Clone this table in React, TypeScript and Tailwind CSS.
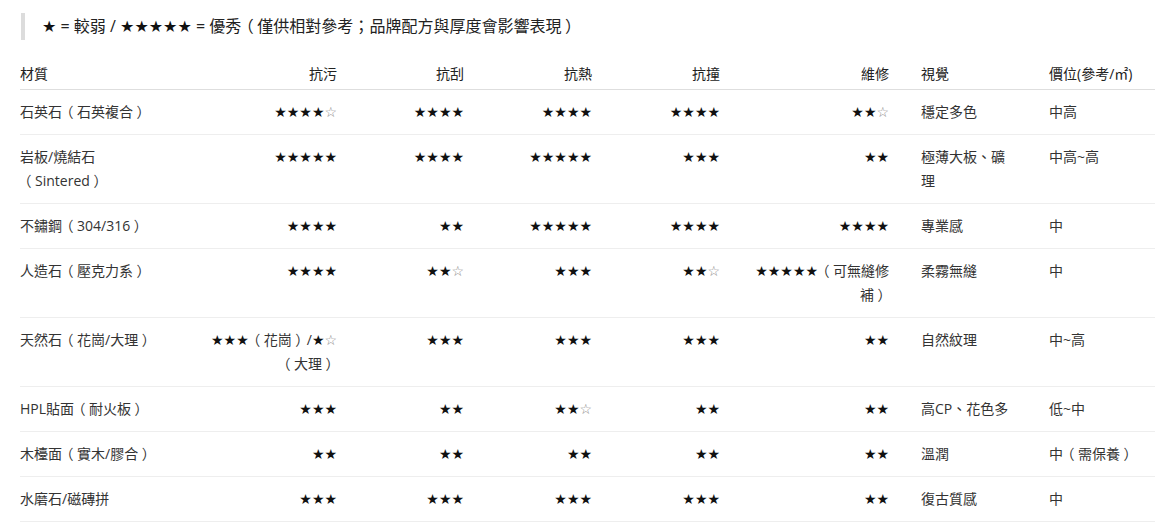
import * as React from "react";

type Row = {
  name: string;
  stain: string;
  scratch: string;
  heat: string;
  impact: string;
  repair: string;
  look: string;
  price: string;
};

const rows: Row[] = [
  { name: "石英石（石英複合）", stain: "★★★★☆", scratch: "★★★★", heat: "★★★★", impact: "★★★★", repair: "★★☆", look: "穩定多色", price: "中高" },
  { name: "岩板/燒結石（Sintered）", stain: "★★★★★", scratch: "★★★★", heat: "★★★★★", impact: "★★★", repair: "★★", look: "極薄大板、礦理", price: "中高~高" },
  { name: "不鏽鋼（304/316）", stain: "★★★★", scratch: "★★", heat: "★★★★★", impact: "★★★★", repair: "★★★★", look: "專業感", price: "中" },
  { name: "人造石（壓克力系）", stain: "★★★★", scratch: "★★☆", heat: "★★★", impact: "★★☆", repair: "★★★★★（可無縫修補）", look: "柔霧無縫", price: "中" },
  { name: "天然石（花崗/大理）", stain: "★★★（花崗）/★☆（大理）", scratch: "★★★", heat: "★★★", impact: "★★★", repair: "★★", look: "自然紋理", price: "中~高" },
  { name: "HPL貼面（耐火板）", stain: "★★★", scratch: "★★", heat: "★★☆", impact: "★★", repair: "★★", look: "高CP、花色多", price: "低~中" },
  { name: "木檯面（實木/膠合）", stain: "★★", scratch: "★★", heat: "★★", impact: "★★", repair: "★★", look: "溫潤", price: "中（需保養）" },
  { name: "水磨石/磁磚拼", stain: "★★★", scratch: "★★★", heat: "★★★", impact: "★★★", repair: "★★", look: "復古質感", price: "中" },
];

const baseFont = "font-['Open_Sans','Noto_Sans_CJK_TC',sans-serif]";

// narrow DejaVu stars, lighter hollow ones; full-width parens are set
// proportional and padded so the ink sits in the middle of its box
function Rich({ text }: { text: string }) {
  return (
    <>
      {Array.from(text).map((ch, i) => {
        if (ch === "☆")
          return (
            <span key={i} className="font-['DejaVu_Sans'] text-[#888]">
              {ch}
            </span>
          );
        if (ch === "★")
          return (
            <span key={i} className="font-['DejaVu_Sans'] text-[#111]">
              {ch}
            </span>
          );
        if (ch === "（" || ch === "）")
          return (
            <span key={i} className="px-[4px] [font-feature-settings:'palt']">
              {ch}
            </span>
          );
        return <React.Fragment key={i}>{ch}</React.Fragment>;
      })}
    </>
  );
}

export default function App() {
  const th = "pt-[11px] pb-[3px] pr-[32px] font-normal text-[#222]";
  const td = "py-[10px] pr-[32px] align-top";
  const colCls = [
    "w-[182px]",
    "w-[167px]",
    "w-[127px]",
    "w-[128px]",
    "w-[128px]",
    "w-[169px]",
    "w-[128px]",
    "w-[106px]",
  ];

  return (
    <div className="bg-white min-h-[529px] pt-[13px] text-[#333]">
      <blockquote
        className={`ml-[21px] border-l-4 border-[#dcdcdc] pl-[17px] h-[27px] flex items-center text-[16px] leading-[24px] text-[#222] ${baseFont}`}
      >
        <span>
          <Rich text="★ = 較弱 / ★★★★★ = 優秀（僅供相對參考；品牌配方與厚度會影響表現）" />
        </span>
      </blockquote>

      <table
        className={`mt-[11px] ml-[20px] w-[1135px] table-fixed border-collapse text-[14px] leading-[24px] ${baseFont}`}
      >
        <colgroup>
          {colCls.map((c, i) => (
            <col key={i} className={c} />
          ))}
        </colgroup>
        <thead>
          <tr className="border-b border-[#dedede]">
            <th className={`${th} text-left`}>材質</th>
            <th className={`${th} text-right`}>抗污</th>
            <th className={`${th} text-right`}>抗刮</th>
            <th className={`${th} text-right`}>抗熱</th>
            <th className={`${th} text-right`}>抗撞</th>
            <th className={`${th} text-right`}>維修</th>
            <th className={`${th} text-left`}>視覺</th>
            <th className="pt-[11px] pb-[3px] pr-0 font-normal text-[#222] text-left whitespace-nowrap">
              價位(參考/㎡)
            </th>
          </tr>
        </thead>
        <tbody>
          {rows.map((r) => (
            <tr key={r.name} className="border-b border-[#eeeeee]">
              <td className={`${td} text-left`}>
                <Rich text={r.name} />
              </td>
              <td className={`${td} text-right`}>
                <Rich text={r.stain} />
              </td>
              <td className={`${td} text-right`}>
                <Rich text={r.scratch} />
              </td>
              <td className={`${td} text-right`}>
                <Rich text={r.heat} />
              </td>
              <td className={`${td} text-right`}>
                <Rich text={r.impact} />
              </td>
              <td className={`${td} text-right`}>
                <Rich text={r.repair} />
              </td>
              <td className={`${td} text-left`}>{r.look}</td>
              <td className="py-[10px] pr-0 align-top text-left">
                <Rich text={r.price} />
              </td>
            </tr>
          ))}
        </tbody>
      </table>
    </div>
  );
}
